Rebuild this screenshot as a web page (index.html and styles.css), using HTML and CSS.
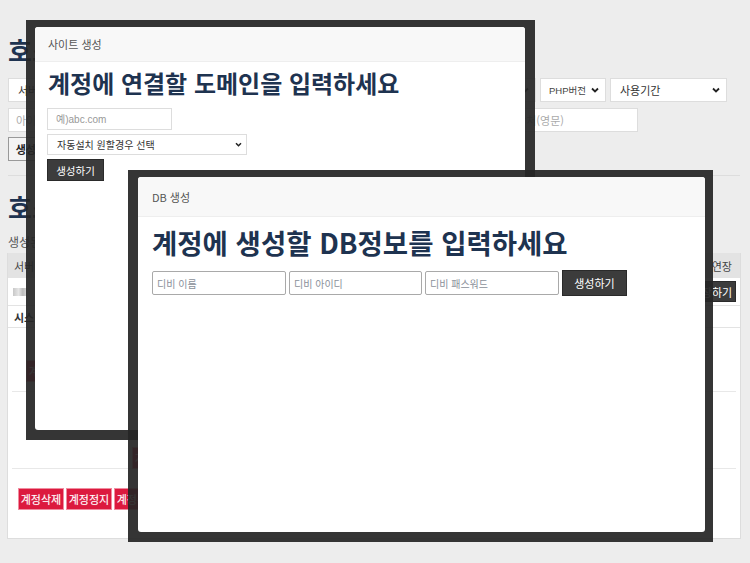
FILE: index.html
```html
<!DOCTYPE html>
<html lang="ko">
<head>
<meta charset="utf-8">
<title>호스팅 관리</title>
<link rel="stylesheet" href="styles.css">
</head>
<body>
<div class="page">
  <h1 class="page-title">호스팅 계정 생성</h1>
  <div class="form-row row1">
    <div class="fsel w-server"><span>서버 선택</span><svg viewBox="0 0 8 6"><path d="M1 1.5 4 4.5 7 1.5" fill="none" stroke="#222" stroke-width="1.8"/></svg></div>
    <input class="finput w-domain" placeholder="도메인">
    <div class="fsel w-plan"><span>상품 선택</span><svg viewBox="0 0 8 6"><path d="M1 1.5 4 4.5 7 1.5" fill="none" stroke="#222" stroke-width="1.8"/></svg></div>
    <div class="fsel w-php"><span class="latin">PHP버전</span><svg viewBox="0 0 8 6"><path d="M1 1.5 4 4.5 7 1.5" fill="none" stroke="#222" stroke-width="1.8"/></svg></div>
    <div class="fsel w-period"><span>사용기간</span><svg viewBox="0 0 8 6"><path d="M1 1.5 4 4.5 7 1.5" fill="none" stroke="#222" stroke-width="1.8"/></svg></div>
  </div>
  <div class="form-row row2">
    <input class="finput w-id" placeholder="아이디(영문)">
    <input class="finput w-pw" placeholder="비밀번호">
    <input class="finput w-mail" placeholder="연락처(영문)">
  </div>
  <div class="form-row row3">
    <button class="btn-outline">생성하기</button>
  </div>
  <hr class="divider">
  <h1 class="page-title second">호스팅 계정 관리</h1>
  <p class="desc">생성된 계정 목록</p>
  <div class="card">
    <div class="tbl-head">
      <span class="c-server">서버</span>
      <span class="c-ext">연장</span>
    </div>
    <div class="tbl-row r1">
      <span class="censor"></span>
      <button class="btn-dark small">연장하기</button>
    </div>
    <div class="tbl-row r2">
      <span class="sys">시스템</span>
    </div>
    <div class="acct a1"><button class="btn-red">계정정지</button></div>
    <div class="acct a2"><button class="btn-red">계정정지</button></div>
    <div class="actions">
      <button class="btn-red">계정삭제</button>
      <button class="btn-red">계정정지</button>
      <button class="btn-red">계정복구</button>
    </div>
  </div>
</div>

<div class="modal-frame mf-site">
  <div class="modal">
    <div class="modal-head">사이트 생성</div>
    <div class="modal-body">
      <h2 class="modal-title">계정에 연결할 도메인을 입력하세요</h2>
      <input class="m-input" placeholder="예)abc.com">
      <div class="m-select"><span>자동설치 원할경우 선택</span><svg viewBox="0 0 8 6"><path d="M1 1.5 4 4.5 7 1.5" fill="none" stroke="#222" stroke-width="1.8"/></svg></div>
      <button class="btn-dark m-btn">생성하기</button>
    </div>
  </div>
</div>

<div class="modal-frame mf-db">
  <div class="modal">
    <div class="modal-head">DB 생성</div>
    <div class="modal-body">
      <h2 class="modal-title">계정에 생성할 DB정보를 입력하세요</h2>
      <div class="db-row">
        <input class="db-input" placeholder="디비 이름">
        <input class="db-input" placeholder="디비 아이디">
        <input class="db-input" placeholder="디비 패스워드">
        <button class="btn-dark db-btn">생성하기</button>
      </div>
    </div>
  </div>
</div>
</body>
</html>
```

FILE: styles.css
```css
* { box-sizing: border-box; }
html, body { margin: 0; }
body {
  background: #ededed;
  font-family: "Liberation Sans", "Noto Sans CJK KR", sans-serif;
  color: #333;
  font-size: 11px;
  width: 750px;
  height: 563px;
  overflow: hidden;
  position: relative;
}
.page { padding: 0 10px 0 8px; }
.page-title {
  margin: 36px 0 0;
  font: 700 26px/28px "Noto Sans CJK KR", sans-serif;
  color: #1e3350;
  white-space: nowrap;
}
.page-title.second { margin-top: 17px; }

.form-row { display: flex; gap: 4px; height: 24px; }
.row1 { margin-top: 14px; }
.row2 { margin-top: 6px; }
.row3 { margin-top: 5px; }
.fsel {
  background: #fff;
  border: 1px solid #ddd;
  display: flex;
  align-items: center;
  justify-content: space-between;
  padding: 0 6px 0 9px;
  font-size: 11px;
  color: #333;
  font-family: "Noto Sans CJK KR", sans-serif;
  white-space: nowrap;
}
.fsel .latin { font-family: "Liberation Sans", "Noto Sans CJK KR", sans-serif; font-size: 9.5px; color: #444; }
.fsel svg { width: 8px; height: 6px; flex: none; }
.w-php { padding-left: 8px; }
.w-server { width: 112px; }
.w-domain { width: 206px; }
.w-plan { width: 202px; }
.w-php { width: 66px; }
.w-period { width: 117px; }
.finput {
  border: 1px solid #ddd;
  background: #fff;
  padding: 0 7px;
  font-size: 11px;
  font-family: "Noto Sans CJK KR", sans-serif;
  height: 24px;
  outline: none;
}
.finput::placeholder { color: #aaa; }
.w-id { width: 232px; }
.w-pw { width: 250px; }
.w-mail { width: 140px; }
.btn-outline {
  height: 24px;
  width: 56px;
  background: #f4f4f4;
  border: 1px solid #999;
  font: 700 11px "Noto Sans CJK KR", sans-serif;
  color: #222;
  padding: 0;
}
.divider { margin: 14px 0 0; border: 0; border-top: 1px solid #ddd; width: 732px; }
.desc { margin: 14px 0 0; font: 12px/14px "Noto Sans CJK KR", sans-serif; color: #555; }

.card {
  margin: 4px 0 0 -1px;
  width: 734px;
  height: 286px;
  background: #fff;
  border: 1px solid #ddd;
  border-top: 0;
}
.tbl-head {
  height: 25px;
  background: #e3e3e3;
  display: flex;
  align-items: center;
  justify-content: space-between;
  padding: 0 8px 0 6px;
  font: 11px "Noto Sans CJK KR", sans-serif;
  color: #444;
}
.tbl-row {
  display: flex;
  align-items: center;
  justify-content: space-between;
  border-bottom: 1px solid #e3e3e3;
  padding: 0 4px 0 5px;
}
.r1 { height: 28px; }
.r2 { height: 22px; }
.censor {
  width: 14px; height: 8px;
  background: linear-gradient(90deg, #c8c8c8, #e6e6e6 40%, #bcbcbc 70%, #dcdcdc);
}
.sys { font: 700 11px "Noto Sans CJK KR", sans-serif; color: #333; padding-left: 1px; }
.btn-dark {
  background: #3c3c3c;
  border: 1px solid #2a2a2a;
  color: #fff;
  font-family: "Noto Sans CJK KR", sans-serif;
  padding: 0;
}
.btn-dark.small { width: 48px; height: 21px; font-size: 11px; }
.acct {
  margin: 0 4px;
  border-bottom: 1px solid #e8e8e8;
  display: flex;
  align-items: flex-start;
}
.a1 { height: 64px; padding: 32px 0 0 14px; }
.a2 { height: 77px; padding: 55px 0 0 120px; }
.btn-red {
  height: 22px;
  width: 46px;
  padding: 0;
  background: #dc1a3e;
  border: 1px solid #f08ca0;
  color: #fff;
  font: 11px "Noto Sans CJK KR", sans-serif;
  text-shadow: 0 0 1px rgba(255,255,255,0.4);
}
.actions { display: flex; gap: 2px; padding: 19px 0 0 10px; }

/* modals */
.modal-frame { position: absolute; background: rgba(38, 38, 38, 0.93); }
.mf-site { left: 26px; top: 20px; width: 509px; height: 420px; padding: 7px 10px 10px 9px; }
.mf-db { left: 128px; top: 170px; width: 585px; height: 372px; padding: 7px 8px 10px 10px; }
.modal { background: #fff; height: 100%; border-radius: 3px; overflow: hidden; }
.modal-head {
  background: #f8f8f8;
  border-bottom: 1px solid #eeeeee;
  display: flex;
  align-items: center;
  font: 11px "Noto Sans CJK KR", sans-serif;
  color: #555;
}
.mf-site .modal-head { height: 35px; padding-left: 13px; }
.mf-db .modal-head { height: 40px; padding-left: 14px; }
.modal-title {
  margin: 0;
  font-family: "Noto Sans CJK KR", sans-serif;
  font-weight: 700;
  color: #1e3350;
  white-space: nowrap;
}
.mf-site .modal-body { padding: 0 12px; display: flex; flex-direction: column; align-items: flex-start; }
.mf-site .modal-title { font-size: 24px; line-height: 30px; margin: 6px 0 0 1px; }
.m-input {
  margin-top: 10px;
  width: 125px;
  height: 22px;
  border: 1px solid #ddd;
  padding: 0 8px;
  font: 10px "Liberation Sans", "Noto Sans CJK KR", sans-serif;
  outline: none;
}
.m-input::placeholder { color: #999; }
.m-select {
  margin-top: 4px;
  width: 200px;
  height: 21px;
  border: 1px solid #ddd;
  display: flex;
  align-items: center;
  justify-content: space-between;
  padding: 0 4px 0 9px;
  font: 10px "Noto Sans CJK KR", sans-serif;
  color: #333;
}
.m-select svg { width: 7px; height: 5px; }
.m-btn { margin-top: 4px; width: 57px; height: 22px; font-size: 10.5px; }

.mf-db .modal-body { padding: 0 14px; }
.mf-db .modal-title { font-size: 27.5px; line-height: 34px; margin-top: 8px; }
.db-row { display: flex; align-items: center; gap: 3px; margin-top: 11px; height: 26px; }
.db-input {
  width: 134px;
  height: 24px;
  border: 1px solid #a9a9a9;
  border-radius: 2px;
  padding: 0 4px;
  font: 10px "Noto Sans CJK KR", sans-serif;
  outline: none;
}
.db-input:nth-child(2) { width: 133px; }
.db-input::placeholder { color: #8a909a; }
.db-btn { width: 65px; height: 26px; font-size: 11px; }
```
